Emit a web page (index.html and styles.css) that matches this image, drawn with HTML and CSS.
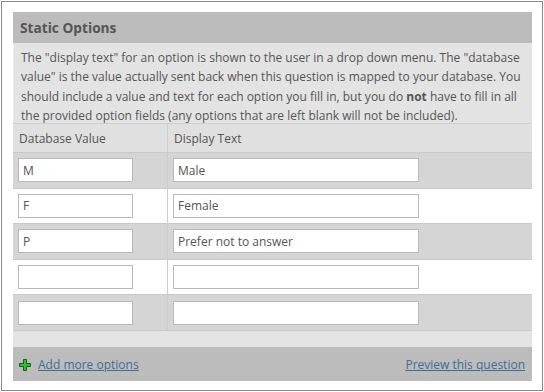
FILE: index.html
```html
<!DOCTYPE html>
<html lang="en">

<head>
    <meta charset="UTF-8">
    <meta name="viewport" content="width=device-width, initial-scale=1.0">
    <title>Static Options</title>
    <link rel="stylesheet" href="styles.css">
</head>

<body>
    <div class="frame">
        <div class="panel">
            <div class="panel-title">Static Options</div>

            <p class="panel-desc">
                The "display text" for an option is shown to the user in a drop down menu. The "database value" is the value actually sent back when this question is mapped to your database. You should include a value and text for each option you fill in, but you do <b>not</b> have to fill in all the provided option fields (any options that are left blank will not be included).
            </p>

            <table class="options">
                <thead>
                    <tr>
                        <th class="col-value">Database Value</th>
                        <th>Display Text</th>
                    </tr>
                </thead>
                <tbody>
                    <tr>
                        <td><input type="text" class="value-input" value="M"></td>
                        <td><input type="text" class="text-input" value="Male"></td>
                    </tr>
                    <tr>
                        <td><input type="text" class="value-input" value="F"></td>
                        <td><input type="text" class="text-input" value="Female"></td>
                    </tr>
                    <tr>
                        <td><input type="text" class="value-input" value="P"></td>
                        <td><input type="text" class="text-input" value="Prefer not to answer"></td>
                    </tr>
                    <tr>
                        <td><input type="text" class="value-input" value=""></td>
                        <td><input type="text" class="text-input" value=""></td>
                    </tr>
                    <tr>
                        <td><input type="text" class="value-input" value=""></td>
                        <td><input type="text" class="text-input" value=""></td>
                    </tr>
                </tbody>
            </table>

            <div class="panel-gap"></div>

            <div class="panel-footer">
                <a href="#" class="add-link">
                    <svg class="plus-icon" width="12" height="12" viewBox="0 0 12 12">
                        <path d="M4.5 0.5h3v4h4v3h-4v4h-3v-4h-4v-3h4z" fill="#2fc02f" stroke="#1d5a1d" stroke-width="1" />
                    </svg>
                    <span>Add more options</span>
                </a>
                <a href="#" class="preview-link">Preview this question</a>
            </div>
        </div>
    </div>
</body>

</html>
```

FILE: styles.css
```css
body {
    margin: 0;
    padding: 0;
    background-color: #fff;
    font-family: "Open Sans", "Liberation Sans", sans-serif;
    color: #555;
}

.frame {
    box-sizing: border-box;
    width: 542px;
    height: 390px;
    margin: 1px 0 0 1px;
    padding: 10px 0 0 11px;
    border: 1px solid #8c8c8c;
}

.panel {
    width: 519px;
}

.panel-title {
    height: 31px;
    padding-left: 7px;
    line-height: 31px;
    font-size: 13.7px;
    font-weight: bold;
    background-color: #bcbcbc;
}

.panel-desc {
    box-sizing: border-box;
    height: 80px;
    margin: 0;
    padding: 5px 4px 0 7px;
    font-size: 12px;
    line-height: 19.4px;
    background-color: #e3e3e3;
    border-left: 1px solid #ededed;
}

.options {
    width: 100%;
    border-collapse: collapse;
    font-size: 12px;
}

.options th {
    height: 28px;
    padding: 0 0 0 6px;
    text-align: left;
    font-weight: normal;
    background-color: #e0e0e0;
    border-top: 1px solid #cfcfcf;
}

.options .col-value {
    width: 148px;
}

.options th + th,
.options td + td {
    border-left: 1px solid #cdcdcd;
}

.options td {
    height: 34.6px;
    padding: 0 0 0 5px;
    border-top: 1px solid #c9c9c9;
}

.options tbody tr:nth-child(odd) {
    background-color: #d5d5d5;
}

.options tbody tr:nth-child(even) {
    background-color: #fff;
}

.options tbody tr:last-child td {
    border-bottom: 1px solid #c9c9c9;
}

.options input {
    box-sizing: border-box;
    height: 24px;
    padding: 0 4px;
    font-family: "Open Sans", "Liberation Sans", sans-serif;
    font-size: 12px;
    color: #555;
    background-color: #fff;
    border: 1px solid #b9b9b9;
    border-radius: 0;
    display: block;
}

.value-input {
    width: 115px;
}

.text-input {
    width: 246px;
}

.panel-gap {
    height: 16px;
    background-color: #e4e4e4;
}

.panel-footer {
    display: flex;
    justify-content: space-between;
    align-items: center;
    height: 34px;
    padding: 2px 7px 0 6px;
    box-sizing: border-box;
    background-color: #bcbcbc;
    font-size: 12px;
}

.panel-footer a {
    color: #3f6c99;
}

.add-link {
    display: flex;
    align-items: center;
    gap: 7px;
}

.add-link span {
    text-decoration: underline;
}

.plus-icon {
    display: block;
}
```
